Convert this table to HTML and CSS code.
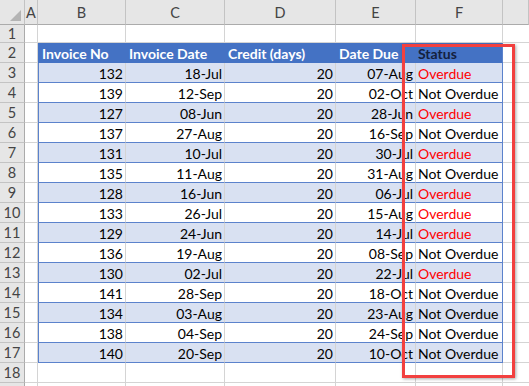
FILE: index.html
```html
<!DOCTYPE html>
<html>
<head>
<meta charset="utf-8">
<link rel="stylesheet" href="styles.css">
</head>
<body>
<div class="sheet">
  <div class="row colhead">
    <div class="c corner"><span class="tri"></span></div>
    <div class="c ch">A</div><div class="c ch">B</div><div class="c ch">C</div><div class="c ch">D</div><div class="c ch">E</div><div class="c ch">F</div><div class="c ch last"></div>
  </div>
  <div class="row r1">
    <div class="c rh">1</div><div class="c"></div><div class="c"></div><div class="c"></div><div class="c"></div><div class="c"></div><div class="c"></div><div class="c last"></div>
  </div>
  <div class="row">
    <div class="c rh">2</div><div class="c"></div>
    <div class="c th first">Invoice No</div><div class="c th">Invoice Date</div><div class="c th">Credit (days)</div><div class="c th">Date Due</div><div class="c th end status">Status</div>
    <div class="c last"></div>
  </div>
  <div class="row"><div class="c rh">3</div><div class="c"></div><div class="c td n band first">132</div><div class="c td n band">18-Jul</div><div class="c td n band">20</div><div class="c td n band">07-Aug</div><div class="c td band end red">Overdue</div><div class="c last"></div></div>
  <div class="row"><div class="c rh">4</div><div class="c"></div><div class="c td n first">139</div><div class="c td n">12-Sep</div><div class="c td n">20</div><div class="c td n">02-Oct</div><div class="c td end">Not Overdue</div><div class="c last"></div></div>
  <div class="row"><div class="c rh">5</div><div class="c"></div><div class="c td n band first">127</div><div class="c td n band">08-Jun</div><div class="c td n band">20</div><div class="c td n band">28-Jun</div><div class="c td band end red">Overdue</div><div class="c last"></div></div>
  <div class="row"><div class="c rh">6</div><div class="c"></div><div class="c td n first">137</div><div class="c td n">27-Aug</div><div class="c td n">20</div><div class="c td n">16-Sep</div><div class="c td end">Not Overdue</div><div class="c last"></div></div>
  <div class="row"><div class="c rh">7</div><div class="c"></div><div class="c td n band first">131</div><div class="c td n band">10-Jul</div><div class="c td n band">20</div><div class="c td n band">30-Jul</div><div class="c td band end red">Overdue</div><div class="c last"></div></div>
  <div class="row"><div class="c rh">8</div><div class="c"></div><div class="c td n first">135</div><div class="c td n">11-Aug</div><div class="c td n">20</div><div class="c td n">31-Aug</div><div class="c td end">Not Overdue</div><div class="c last"></div></div>
  <div class="row"><div class="c rh">9</div><div class="c"></div><div class="c td n band first">128</div><div class="c td n band">16-Jun</div><div class="c td n band">20</div><div class="c td n band">06-Jul</div><div class="c td band end red">Overdue</div><div class="c last"></div></div>
  <div class="row"><div class="c rh">10</div><div class="c"></div><div class="c td n first">133</div><div class="c td n">26-Jul</div><div class="c td n">20</div><div class="c td n">15-Aug</div><div class="c td end red">Overdue</div><div class="c last"></div></div>
  <div class="row"><div class="c rh">11</div><div class="c"></div><div class="c td n band first">129</div><div class="c td n band">24-Jun</div><div class="c td n band">20</div><div class="c td n band">14-Jul</div><div class="c td band end red">Overdue</div><div class="c last"></div></div>
  <div class="row"><div class="c rh">12</div><div class="c"></div><div class="c td n first">136</div><div class="c td n">19-Aug</div><div class="c td n">20</div><div class="c td n">08-Sep</div><div class="c td end">Not Overdue</div><div class="c last"></div></div>
  <div class="row"><div class="c rh">13</div><div class="c"></div><div class="c td n band first">130</div><div class="c td n band">02-Jul</div><div class="c td n band">20</div><div class="c td n band">22-Jul</div><div class="c td band end red">Overdue</div><div class="c last"></div></div>
  <div class="row"><div class="c rh">14</div><div class="c"></div><div class="c td n first">141</div><div class="c td n">28-Sep</div><div class="c td n">20</div><div class="c td n">18-Oct</div><div class="c td end">Not Overdue</div><div class="c last"></div></div>
  <div class="row"><div class="c rh">15</div><div class="c"></div><div class="c td n band first">134</div><div class="c td n band">03-Aug</div><div class="c td n band">20</div><div class="c td n band">23-Aug</div><div class="c td band end">Not Overdue</div><div class="c last"></div></div>
  <div class="row"><div class="c rh">16</div><div class="c"></div><div class="c td n first">138</div><div class="c td n">04-Sep</div><div class="c td n">20</div><div class="c td n">24-Sep</div><div class="c td end">Not Overdue</div><div class="c last"></div></div>
  <div class="row"><div class="c rh">17</div><div class="c"></div><div class="c td n band first">140</div><div class="c td n band">20-Sep</div><div class="c td n band">20</div><div class="c td n band">10-Oct</div><div class="c td band end">Not Overdue</div><div class="c last"></div></div>
  <div class="row"><div class="c rh">18</div><div class="c"></div><div class="c"></div><div class="c"></div><div class="c"></div><div class="c"></div><div class="c"></div><div class="c last"></div></div>
  <div class="row"><div class="c rh"></div><div class="c"></div><div class="c"></div><div class="c"></div><div class="c"></div><div class="c"></div><div class="c"></div><div class="c last"></div></div>
  <div class="highlight"></div>
</div>
</body>
</html>
```

FILE: styles.css
```css
html, body {
  margin: 0;
  padding: 0;
  background: #ffffff;
  overflow: hidden;
}
.sheet {
  position: relative;
  width: 529px;
  height: 386px;
  overflow: hidden;
  font-family: Lato, "Open Sans", sans-serif;
  font-size: 14px;
  color: #000;
}
.row {
  display: grid;
  grid-template-columns: 25px 13px 88px 99px 111px 80px 87px 26px;
  height: 20px;
}
.row.colhead { height: 25px; }
.row.r1 { height: 18px; }
.c {
  box-sizing: border-box;
  border-right: 1px solid #d4d4d4;
  border-bottom: 1px solid #d4d4d4;
  display: flex;
  align-items: center;
  white-space: nowrap;
  overflow: visible;
  line-height: 1;
  padding: 2px 3px 0 3px;
}
.c.last { border-right: none; }
.colhead .c {
  background: #e6e6e6;
  border-right: 1px solid #c3c3c3;
  border-bottom: 1px solid #ababab;
  color: #444;
  justify-content: center;
  padding-top: 3px;
  font-size: 14.5px;
}
.corner { position: relative; }
.tri {
  position: absolute;
  right: 3px;
  bottom: 3px;
  width: 0;
  height: 0;
  border-left: 11px solid transparent;
  border-bottom: 11px solid #b4b4b4;
}
.rh {
  background: #e6e6e6;
  border-right: 1px solid #ababab;
  border-bottom: 1px solid #c3c3c3;
  color: #444;
  justify-content: center;
  font-size: 14.5px;
}
.th {
  background: #4472c4;
  color: #fff;
  font-weight: 700;
  border-right: 1px solid #4472c4;
  border-bottom: 1px solid #4472c4;
}
.th.status { color: #14213d; padding-left: 2px; }
.td {
  border-bottom: 1px solid #5b82cc;
}
.td.band { background: #d9e1f2; }
.td.first { border-left: 1px solid #5b82cc; }
.th.first { border-left: 1px solid #4472c4; }
.td.end, .th.end { border-right: 1px solid #5b82cc; padding-left: 2px; }
.n { justify-content: flex-end; padding-right: 2px; }
.red { color: #ff0000; }
.highlight {
  position: absolute;
  left: 402px;
  top: 44px;
  width: 113px;
  height: 334px;
  box-sizing: border-box;
  border: 3px solid #f2403f;
  box-shadow: 1px 1px 3px rgba(0, 0, 0, 0.35);
}
```
